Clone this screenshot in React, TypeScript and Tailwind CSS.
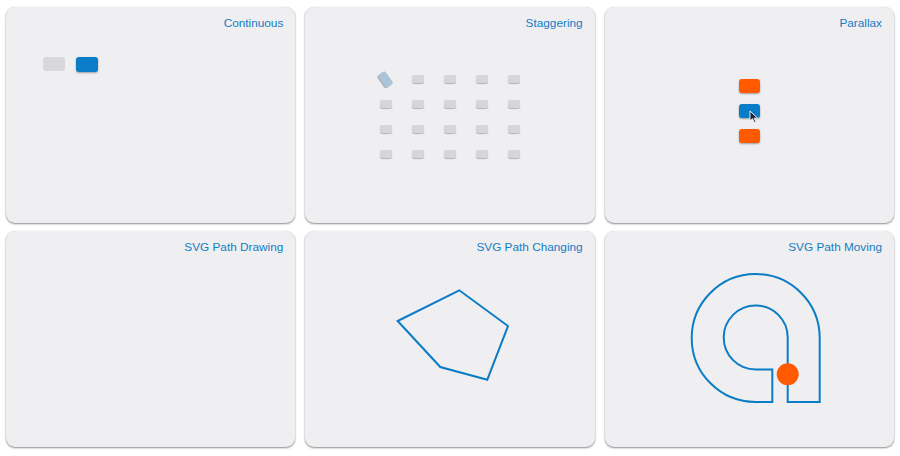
import React from "react";

const blue = "#0b7cc6";

const Card = ({ title, children }: { title: string; children?: React.ReactNode }) => (
  <div className="relative h-[216px] rounded-[9px] bg-[#efeef1] shadow-[0_1px_2px_rgba(0,0,0,0.45),0_0_1px_rgba(0,0,0,0.15)] flex flex-col overflow-hidden">
    <div className="flex justify-end pt-[9px] pr-[12px] text-[11.8px] leading-[14px] text-[#137dc3]">
      {title}
    </div>
    {children}
  </div>
);

const Continuous = () => (
  <div className="flex gap-[11px] pl-[37px] pt-[27px]">
    <div className="w-[22px] h-[14px] rounded-[3px] bg-[#d8d8da]" />
    <div className="w-[22px] h-[15px] rounded-[3px] bg-[#0a7dc9] shadow-[0_1px_2px_rgba(0,0,0,0.35)]" />
  </div>
);

const Staggering = () => {
  const cells = Array.from({ length: 20 }, (_, i) => i);
  return (
    <div className="flex justify-center pt-[45px]">
      <div className="grid grid-cols-5 gap-x-[20px] gap-y-[17px]">
        {cells.map((i) =>
          i === 0 ? (
            <div key={i} className="w-[12px] h-[8px] flex items-center justify-center">
              <div className="shrink-0 w-[15px] h-[9px] rounded-[2px] bg-[#a9c3d9] shadow-[0_1px_1px_rgba(0,0,0,0.3)] rotate-[55deg]" />
            </div>
          ) : (
            <div
              key={i}
              className="w-[12px] h-[8px] rounded-[2px] bg-[#d6d6d8] shadow-[0_1px_1px_rgba(0,0,0,0.25)]"
            />
          )
        )}
      </div>
    </div>
  );
};

const Parallax = () => (
  <div className="flex flex-col items-center gap-[11px] pt-[49px]">
    <div className="w-[21px] h-[14px] rounded-[3px] bg-[#ff5a00] shadow-[0_1px_2px_rgba(0,0,0,0.35)]" />
    <div className="relative w-[21px] h-[14px] rounded-[3px] bg-[#0a7dc9] shadow-[0_1px_2px_rgba(0,0,0,0.35)]">
      <svg className="absolute left-[10px] top-[6px]" width="10" height="14" viewBox="0 0 10 14">
        <path d="M1 1 L1 11 L3.5 8.7 L5.3 12.6 L6.9 11.9 L5.2 8.2 L8.6 8.2 Z" fill="#1b2533" stroke="#ffffff" strokeWidth="0.9" strokeLinejoin="round" />
      </svg>
    </div>
    <div className="w-[21px] h-[14px] rounded-[3px] bg-[#ff5a00] shadow-[0_1px_2px_rgba(0,0,0,0.35)]" />
  </div>
);

const PathChanging = () => (
  <svg className="absolute inset-0" width="289" height="216" viewBox="0 0 289 216">
    <path
      d="M92.7 90 L154.3 59.3 L203 95 L182.3 148.7 L135.3 136 Z"
      fill="none"
      stroke={blue}
      strokeWidth="2"
      strokeLinejoin="miter"
    />
  </svg>
);

const PathMoving = () => (
  <svg className="absolute inset-0" width="289" height="216" viewBox="0 0 289 216">
    <path
      d="M167.3 171 L150.7 171 A64 64 0 1 1 214.7 106.5 L214.7 171 L182.7 171 L182.7 106.5 A32 32 0 1 0 150.7 138.5 L167.3 138.5 Z"
      fill="none"
      stroke={blue}
      strokeWidth="2"
    />
    <circle cx="182.7" cy="143.3" r="11" fill="#ff5a00" />
  </svg>
);

export default function App() {
  return (
    <div
      className="w-[900px] h-[456px] bg-white px-[6px] pt-[7px]"
      style={{ fontFamily: '"Liberation Sans", Arial, sans-serif' }}
    >
      <div className="grid grid-cols-3 gap-x-[10px] gap-y-[8px]">
        <Card title="Continuous">
          <Continuous />
        </Card>
        <Card title="Staggering">
          <Staggering />
        </Card>
        <Card title="Parallax">
          <Parallax />
        </Card>
        <Card title="SVG Path Drawing" />
        <Card title="SVG Path Changing">
          <PathChanging />
        </Card>
        <Card title="SVG Path Moving">
          <PathMoving />
        </Card>
      </div>
    </div>
  );
}
